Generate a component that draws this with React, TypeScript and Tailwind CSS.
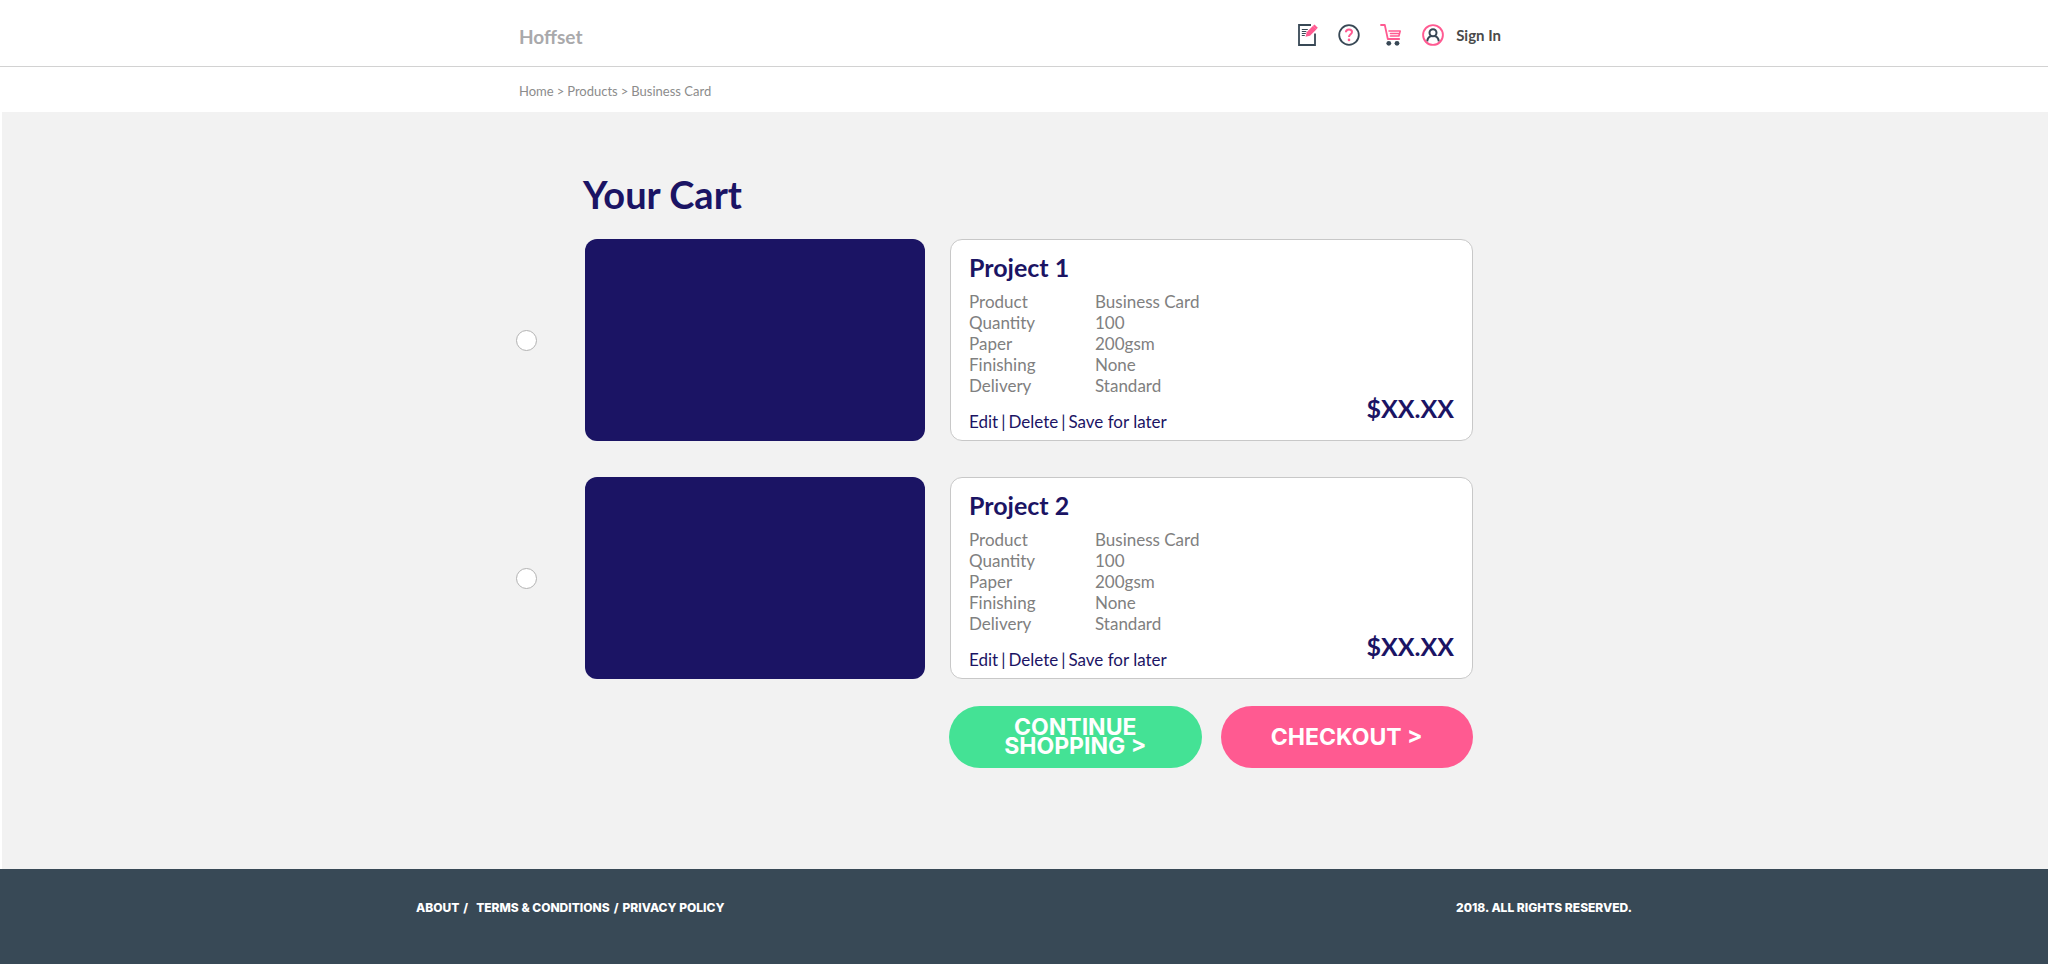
type Project = {
  id: string;
  name: string;
  price: string;
  details: [string, string][];
};

const details: [string, string][] = [
  ["Product", "Business Card"],
  ["Quantity", "100"],
  ["Paper", "200gsm"],
  ["Finishing", "None"],
  ["Delivery", "Standard"],
];

const projects: Project[] = [
  { id: "project-1", name: "Project 1", price: "$XX.XX", details },
  { id: "project-2", name: "Project 2", price: "$XX.XX", details },
];

function QuoteIcon() {
  return (
    <svg width="20" height="22" viewBox="0 0 20 22" fill="none" aria-hidden="true">
      <path d="M13 1H1v20h16V9.500" stroke="#384855" strokeWidth="1.8" />
      <path d="M3.800 5.500h6M3.800 7.500h4.500M3.800 9.500h4M3.800 11.500h3" stroke="#384855" strokeWidth="1" />
      <path d="M7.500 12.800l1.200-4.600 6.100-6.200 3.500 3.500-6.300 6.200z" fill="#ff5a91" />
      <path d="M14.800 2l1.700-1.600 3.300 3.300-1.700 1.800z" fill="#ff5a91" />
    </svg>
  );
}

function HelpIcon() {
  return (
    <svg width="22" height="22" viewBox="0 0 22 22" fill="none" aria-hidden="true">
      <circle cx="11" cy="11" r="9.800" stroke="#384855" strokeWidth="1.800" />
      <path d="M7.900 8.200c.1-1.700 1.300-2.600 3.100-2.600s3 1 3 2.500c0 2.200-3 2.200-3 4.900" stroke="#ff5a91" strokeWidth="2" />
      <circle cx="11" cy="15.900" r="1.300" fill="#ff5a91" />
    </svg>
  );
}

function CartIcon() {
  return (
    <svg width="22" height="22" viewBox="0 0 22 22" fill="none" aria-hidden="true">
      <path d="M1 1h3.800l3 14h11.400" stroke="#ff5a91" strokeWidth="1.800" strokeLinecap="round" strokeLinejoin="round" />
      <path d="M9 7h11.200l-1.300 5H10.500M10.500 9.500h8" stroke="#ff5a91" strokeWidth="1.600" strokeLinecap="round" strokeLinejoin="round" />
      <circle cx="8.800" cy="19.300" r="2.400" fill="#384855" />
      <circle cx="17" cy="19.300" r="2.400" fill="#384855" />
    </svg>
  );
}

function UserIcon() {
  return (
    <svg width="22" height="22" viewBox="0 0 22 22" fill="none" aria-hidden="true">
      <circle cx="11" cy="8.800" r="3.500" stroke="#384855" strokeWidth="2" />
      <path d="M5.200 17.500c.2-3 1.800-4.900 4.300-5.500M16.800 17.500c-.2-3-1.800-4.900-4.300-5.500" stroke="#384855" strokeWidth="2" />
      <circle cx="11" cy="11" r="9.900" stroke="#ff5a91" strokeWidth="1.900" />
    </svg>
  );
}

function Header() {
  return (
    <header className="border-b border-[#d2d2d2]">
      <div className="mx-auto flex h-[66px] w-full max-w-[1010px] items-center justify-between pt-1 pr-7">
        <a href="#" className="pt-1 text-[19px] font-bold text-[#a9a9ab]">
          Hoffset
        </a>
        <nav className="flex items-center gap-5">
          <a href="#" aria-label="Quotes">
            <QuoteIcon />
          </a>
          <a href="#" aria-label="Help">
            <HelpIcon />
          </a>
          <a href="#" aria-label="Cart">
            <CartIcon />
          </a>
          <a href="#" className="flex items-center gap-3 text-[15px] leading-5 font-bold text-[#4a4a4a]">
            <UserIcon />
            Sign In
          </a>
        </nav>
      </div>
    </header>
  );
}

function Breadcrumb() {
  return (
    <nav aria-label="Breadcrumb" className="mx-auto flex h-[45px] w-full max-w-[1010px] items-center gap-[3px] pt-1 text-[13px] text-[#8c8c8c]">
      <a href="#">Home</a>
      <span>&gt;</span>
      <a href="#">Products</a>
      <span>&gt;</span>
      <a href="#">Business Card</a>
    </nav>
  );
}

function CartItem({ project }: { project: Project }) {
  return (
    <li className="flex items-center gap-12">
      <input
        type="radio"
        name="project"
        aria-label={project.name}
        className="size-[21px] shrink-0 appearance-none rounded-full border border-[#b3b3b3] bg-white checked:bg-[#1b1464]"
      />
      <div className="grid grow grid-cols-[340fr_523fr] gap-[25px]">
        <div className="rounded-xl bg-[#1b1464]" />
        <article className="flex items-end justify-between rounded-xl border border-[#c8c8c8] bg-white px-[18px] pt-3 pb-[6px]">
          <div>
            <h2 className="text-[25px] leading-[30px] font-bold text-[#1b1464]">{project.name}</h2>
            <dl className="mt-[9px] grid grid-cols-[126px_auto] text-[17px] leading-[21px] text-[#808080]">
              {project.details.map(([label, value]) => (
                <div key={label} className="contents">
                  <dt>{label}</dt>
                  <dd>{value}</dd>
                </div>
              ))}
            </dl>
            <div className="mt-[14px] flex gap-[3px] text-[17px] leading-6 text-[#1b1464]">
              <button type="button">Edit</button>
              <span>|</span>
              <button type="button">Delete</button>
              <span>|</span>
              <button type="button">Save for later</button>
            </div>
          </div>
          <p className="pb-[11px] text-[25px] leading-[30px] font-bold text-[#1b1464]">{project.price}</p>
        </article>
      </div>
    </li>
  );
}

export default function App() {
  return (
    <div className="flex min-h-screen flex-col bg-white pr-0.5 font-['Lato',sans-serif]">
      <Header />
      <Breadcrumb />
      <main className="ml-0.5 grow bg-[#f2f2f2]">
        <div className="mx-auto w-full max-w-[1018px] pt-[59px] pr-[61px] pb-[100px]">
          <h1 className="pl-[67px] text-[38px] leading-[46px] font-bold text-[#1b1464]">Your Cart</h1>
          <ul className="mt-[22px] flex flex-col gap-9">
            {projects.map((project) => (
              <CartItem key={project.id} project={project} />
            ))}
          </ul>
          <div className="mt-[27px] ml-auto grid w-full max-w-[524px] grid-cols-2 gap-[19px] font-['Inter',sans-serif] text-[23px] leading-[19px] font-bold text-white">
            <button type="button" className="h-[62px] rounded-full bg-[#44e295] px-10">
              CONTINUE SHOPPING &gt;
            </button>
            <button type="button" className="h-[62px] rounded-full bg-[#ff5a91]">
              CHECKOUT &gt;
            </button>
          </div>
        </div>
      </main>
      <footer className="h-[95px] bg-[#384956] font-['Inter',sans-serif] text-[12px] leading-4 font-extrabold text-white">
        <div className="mx-auto flex w-full max-w-[1216px] justify-between pt-[31px]">
          <nav className="flex gap-1">
            <a href="#">ABOUT</a>
            <span>/</span>
            <a href="#" className="pl-1">TERMS &amp; CONDITIONS</a>
            <span>/</span>
            <a href="#">PRIVACY POLICY</a>
          </nav>
          <p>2018. ALL RIGHTS RESERVED.</p>
        </div>
      </footer>
    </div>
  );
}
